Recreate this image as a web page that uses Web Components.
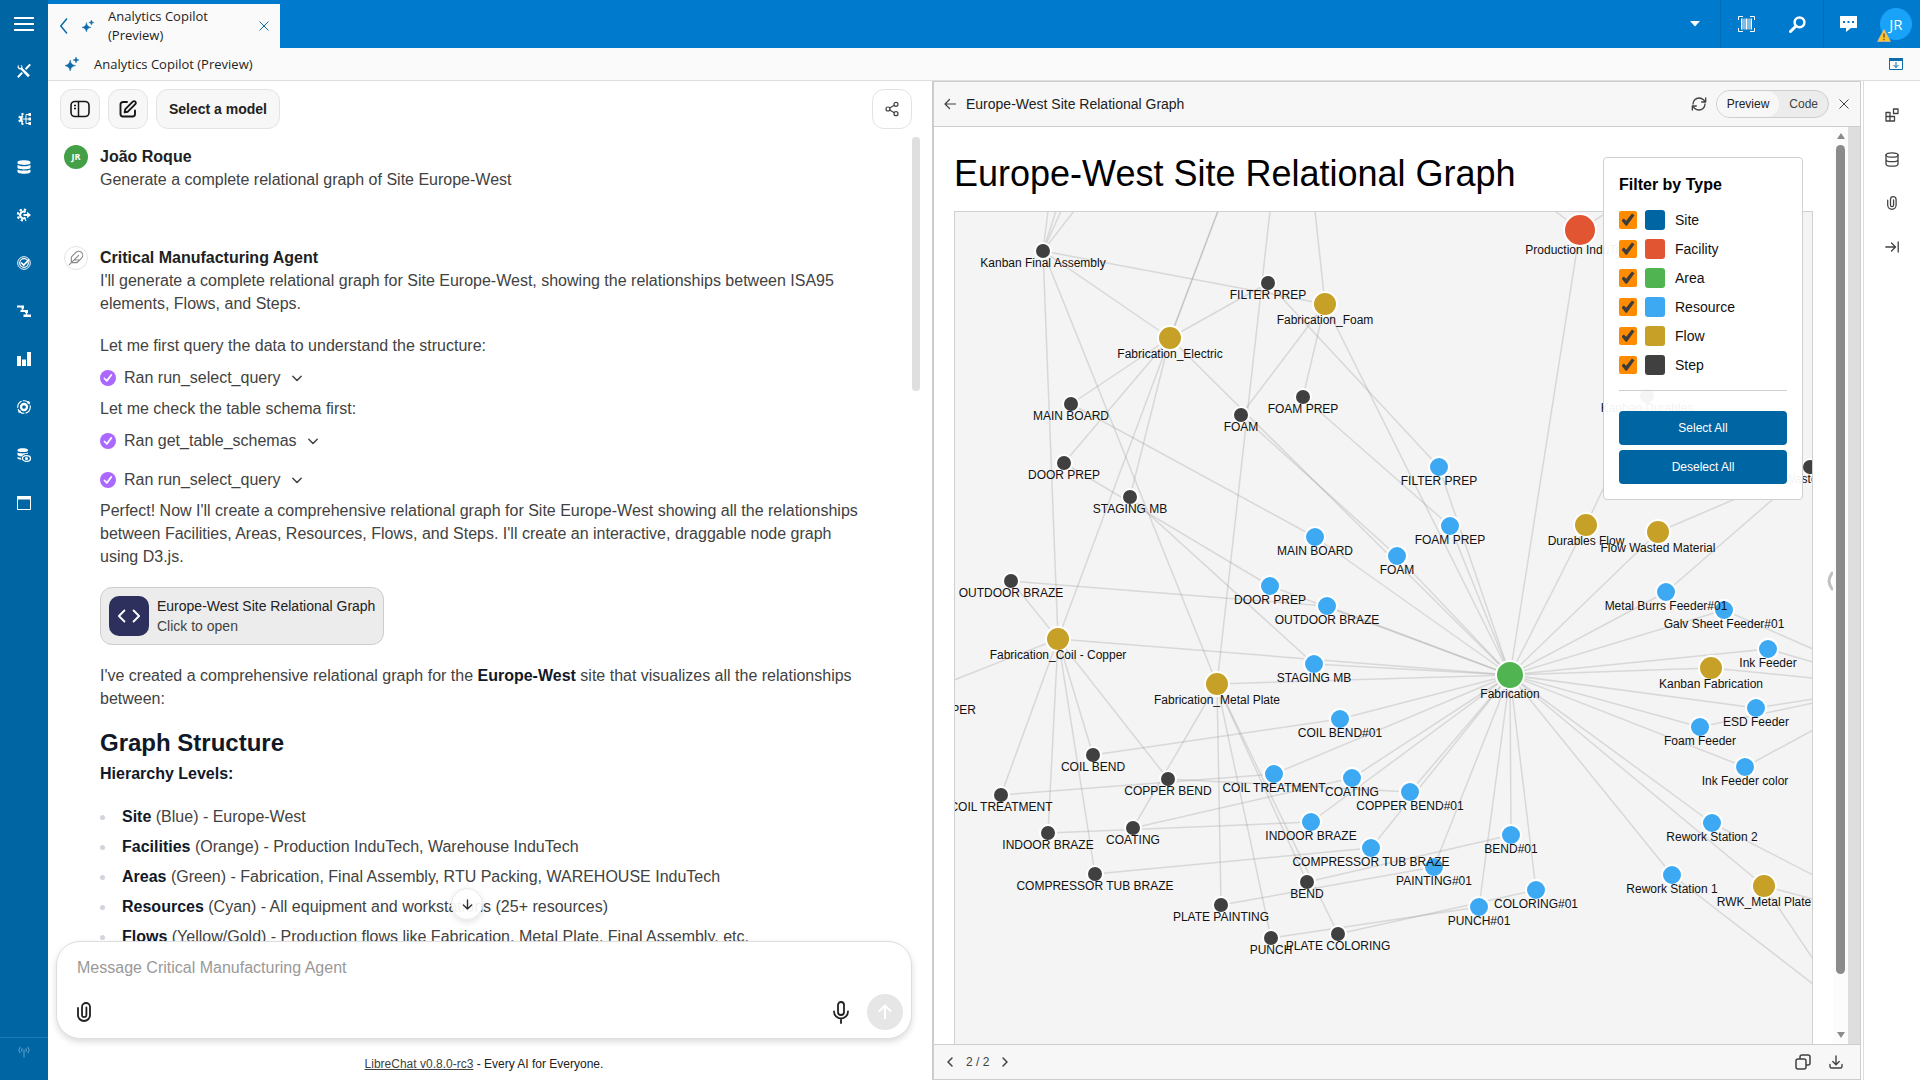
<!DOCTYPE html>
<html lang="en">
<head>
<meta charset="utf-8">
<title>Analytics Copilot (Preview)</title>
<style>
  html, body { margin: 0; height: 100%; overflow: hidden; }
  body { font-family: "Liberation Sans", Arial, sans-serif; color: #212121; background: #fff; }
</style>
</head>
<body>
<app-shell>
  <nav-rail slot="nav"></nav-rail>
  <top-bar slot="top"></top-bar>
  <page-bar slot="bar">Analytics Copilot (Preview)</page-bar>
  <chat-pane slot="chat">
    <chat-message author="João Roque">
      <span slot="avatar">JR</span>
      <p>Generate a complete relational graph of Site Europe-West</p>
    </chat-message>
    <chat-message author="Critical Manufacturing Agent" agent>
      <ui-icon slot="avatar" name="feather" size="16"></ui-icon>
      <p>I'll generate a complete relational graph for Site Europe-West, showing the relationships between ISA95 elements, Flows, and Steps.</p>
      <p class="para">Let me first query the data to understand the structure:</p>
      <tool-run>Ran run_select_query</tool-run>
      <p class="near">Let me check the table schema first:</p>
      <tool-run>Ran get_table_schemas</tool-run>
      <tool-run class="apart">Ran run_select_query</tool-run>
      <p class="near">Perfect! Now I'll create a comprehensive relational graph for Site Europe-West showing all the relationships between Facilities, Areas, Resources, Flows, and Steps. I'll create an interactive, draggable node graph using D3.js.</p>
      <artifact-card class="para" heading="Europe-West Site Relational Graph">Click to open</artifact-card>
      <p class="para">I've created a comprehensive relational graph for the <strong>Europe-West</strong> site that visualizes all the relationships between:</p>
      <h2>Graph Structure</h2>
      <p class="lead"><strong>Hierarchy Levels:</strong></p>
      <ul>
        <li><strong>Site</strong> (Blue) - Europe-West</li>
        <li><strong>Facilities</strong> (Orange) - Production InduTech, Warehouse InduTech</li>
        <li><strong>Areas</strong> (Green) - Fabrication, Final Assembly, RTU Packing, WAREHOUSE InduTech</li>
        <li><strong>Resources</strong> (Cyan) - All equipment and workstations (25+ resources)</li>
        <li><strong>Flows</strong> (Yellow/Gold) - Production flows like Fabrication, Metal Plate, Final Assembly, etc.</li>
      </ul>
    </chat-message>
  </chat-pane>
  <artifact-pane slot="artifact" heading="Europe-West Site Relational Graph">
    <relation-graph></relation-graph>
    <filter-panel slot="overlay"></filter-panel>
  </artifact-pane>
  <tool-rail slot="tools"></tool-rail>
</app-shell>

<style>
  /* Prose inside chat messages lives in the light DOM */
  chat-message p { margin: 0; }
  chat-message .para { margin-top: 19px; }
  chat-message .near { margin-top: 8px; }
  chat-message tool-run { margin-top: 9px; }
  chat-message tool-run.apart { margin-top: 16px; }
  chat-message h2 { margin: 17px 0 0; font-size: 24px; line-height: 32px; font-weight: 600; color: #111827; }
  chat-message .lead { margin-top: 3px; }
  chat-message strong { font-weight: 600; color: #111827; }
  chat-message ul { list-style: none; margin: 17px 0 0; padding: 0; }
  chat-message li { display: flex; align-items: center; white-space: pre; line-height: 30px; }
  chat-message li::before { content: ""; width: 5px; height: 5px; border-radius: 50%; background: #d1d5db; margin-right: 17px; }
</style>

<script>
const S = 'fill="none" stroke="currentColor" stroke-linecap="round" stroke-linejoin="round"';
const ICONS = {
  menu: ['0 0 20 14', '<path d="M0 1h20M0 7h20M0 13h20" stroke="currentColor" stroke-width="2"/>'],
  tools: ['0 0 14 14', '<path d="M1.500 .8a2.800 2.800 0 0 0-.8 3 2.700 2.700 0 0 0 3 1.700l7.300 7.700 1.900-1.900-7.500-7.300a2.700 2.700 0 0 0-1.900-3.200l1.100 1.900-1.100 1.400-1.600-.5z" fill="currentColor"/><path d="M13.200.3 8.600 5.200M5.200 8.600l-4.300 4.600" stroke="currentColor" stroke-width="2"/>'],
  geartree: ['0 0 14 14', '<path d="M6 4a3.200 3.200 0 0 0 0 6" fill="none" stroke="currentColor" stroke-width="2.200"/><path d="M6.500 1.800A5.300 5.300 0 0 0 6.500 12.200" fill="none" stroke="currentColor" stroke-width="2" stroke-dasharray="2.200 1.800"/><path d="M5 7h8M9 7V2.500h4M9 7v4.500h4" fill="none" stroke="currentColor"/><path d="M11.500 1h2.500v3h-2.500zM11.500 5.500h2.500v3h-2.500zM11.500 10h2.500v3h-2.500z" fill="currentColor"/>'],
  dbsolid: ['0 0 14 14', '<path d="M.5 2.200C.5 1 3.300.2 7 .2s6.500.8 6.500 2v.9C13.500 4.300 10.700 5 7 5S.5 4.300.5 3.100zM.5 5C2 5.900 4.300 6.200 7 6.200S12 5.900 13.500 5v2.500C13.500 8.700 10.700 9.400 7 9.400S.5 8.700.5 7.500zM.5 9.400c1.500.9 3.800 1.200 6.500 1.200s5-.3 6.500-1.200v2.400c0 1.200-2.800 2-6.500 2s-6.500-.8-6.500-2z" fill="currentColor"/>'],
  geararrow: ['0 0 14 14', '<path d="M8.500 4.400a3.300 3.300 0 1 0 0 5.200" fill="none" stroke="currentColor" stroke-width="2"/><path d="M9 2.200a5.500 5.500 0 1 0 0 9.600" fill="none" stroke="currentColor" stroke-width="2.200" stroke-dasharray="2.300 2"/><path d="M6.500 6H10V3.800L14 7l-4 3.200V8H6.500z" fill="currentColor"/>'],
  targetcheck: ['0 0 14 14', '<g fill="none" stroke="currentColor"><circle cx="7" cy="7" r="6.300" stroke-width="1"/><circle cx="7" cy="7" r="4.300" stroke-width="1.200"/><path d="m4 6.500 2.700 2.700L12 3.500" stroke-width="1.700"/></g>'],
  steps: ['0 0 14 14', '<path d="M0 1.500h7v3H4.500v-1H0zM3.500 6H11v3H8V8H3.500zM6.500 10.500H14v2.500H6.500z" fill="currentColor"/><path d="M5.500 3v4M9.500 7v5" stroke="currentColor" stroke-width="1.500"/>'],
  bars: ['0 0 14 14', '<path d="M0 4h4v10H0zM5 7.500h4V14H5zM10 0h4v14h-4z" fill="currentColor"/>'],
  target: ['0 0 14 14', '<circle cx="7" cy="7" r="6.300" fill="none" stroke="currentColor" stroke-width="1.100" stroke-dasharray="8 1.200"/><circle cx="7" cy="7" r="3" fill="none" stroke="currentColor" stroke-width="2.300"/><circle cx="11.500" cy="2.500" r="1.300" fill="currentColor"/><circle cx="2.500" cy="11.500" r="1.300" fill="currentColor"/>'],
  dbeye: ['0 0 14 14', '<path d="M.5 1.900C.5.800 3 .2 5.800.2s5.200.6 5.200 1.700v.6c0 1.100-2.400 1.600-5.200 1.600S.5 3.600.5 2.500zM.5 4.600c1.300.6 3.200.9 5.300.9s4-.3 5.200-.9v1.200c-3 .1-5 1-6.300 2.600C2.200 8.200.5 7.700.5 6.800zM.5 9c.9.4 2 .7 3.200.8l.9 2C2.200 11.700.5 11.200.5 10.300z" fill="currentColor"/><ellipse cx="9.500" cy="10.500" rx="4" ry="2.900" fill="none" stroke="currentColor" stroke-width="1.300"/><circle cx="9.500" cy="10.500" r="1.500" fill="currentColor"/>'],
  window: ['0 0 14 14', '<path d="M.5.500h13v13H.5z" fill="none" stroke="currentColor"/><path d="M0 0h14v3.500H0z" fill="currentColor"/>'],
  broadcast: ['0 0 14 14', `<g ${S}><path d="M3 2a4.500 4.500 0 0 0 0 6M11 2a4.500 4.500 0 0 1 0 6M5 3.500a2.500 2.500 0 0 0 0 3M9 3.500a2.500 2.500 0 0 1 0 3M7 5v7"/></g>`],
  back: ['0 0 8 16', '<path d="M7 .5.800 8 7 15.500" fill="none" stroke="currentColor" stroke-width="1.500"/>'],
  sparkle: ['0 0 14 14', '<path d="M5.200 3C5.900 6.600 6.900 7.800 10.600 8.600 6.900 9.400 5.900 10.600 5.200 14.200 4.500 10.600 3.500 9.400-.2 8.600 3.500 7.800 4.500 6.600 5.200 3zM11 0c.4 2 1 2.600 3 3-2 .4-2.600 1-3 3-.4-2-1-2.600-3-3 2-.4 2.600-1 3-3z" fill="currentColor" stroke="currentColor" stroke-width=".5"/>'],
  close: ['0 0 10 10', '<path d="m.5.500 9 9M9.500.500l-9 9" stroke="currentColor"/>'],
  caret: ['0 0 10 6', '<path d="M0 0h10L5 5.500z" fill="currentColor"/>'],
  barcode: ['0 0 17 16', '<path d="M.5 4V.500H5M12 .5h4.500V4M.5 12v3.500H5M12 15.500h4.500V12" fill="none" stroke="currentColor"/><path d="M3 2.500h1.500v11H3zM5.500 2.500h1v11h-1zM7.500 2.500h2v11h-2zM10.500 2.500h1v11h-1zM12.500 2.500H14v11h-1.500z" fill="currentColor"/>'],
  search: ['0 0 17 17', '<circle cx="10.500" cy="6.300" r="4.900" fill="none" stroke="currentColor" stroke-width="2.500"/><path d="m7 10-5.500 5.500" stroke="currentColor" stroke-width="3" stroke-linecap="round"/>'],
  chat: ['0 0 17 16', '<path d="M0 0h17v12H11l-5 4v-4H0z" fill="currentColor"/><path d="M3 5h2v2H3zM7.500 5h2v2h-2zM12 5h2v2h-2z" fill="#007acc"/>'],
  warning: ['0 0 14 13', '<path d="M7 .5 13.500 12.500H.5z" fill="#fdc32d" stroke="#f0b8a0" stroke-width=".6"/><path d="M7 4.500v4M7 9.700v1.500" stroke="#7a5a10" stroke-width="1.500"/>'],
  dock: ['0 0 14 12', '<path d="M.5.500h13v11H.5z" fill="none" stroke="currentColor"/><path d="M0 0h14v3H0z" fill="currentColor"/><path d="M7 4v5.500M4.500 7 7 9.500 9.500 7" fill="none" stroke="currentColor"/>'],
  sidebar: ['0 0 20 18', '<rect x="1" y="1.500" width="18" height="15" rx="4" fill="none" stroke="currentColor" stroke-width="1.600"/><path d="M8.500 1.500v15" stroke="currentColor" stroke-width="1.500"/><path d="M4 5.500h2M4 8.500h2" stroke="currentColor" stroke-width="1.500"/>'],
  compose: ['0 0 18 18', `<g ${S} stroke-width="1.900"><path d="M8 2H4a2.500 2.500 0 0 0-2.500 2.500v9.500A2.500 2.500 0 0 0 4 16.500h9.500A2.500 2.500 0 0 0 16 14v-3.500"/><path d="m6.300 9.200 7.500-7.500a1.700 1.700 0 0 1 2.500 2.500l-7.500 7.500-3.200.7z"/></g>`],
  share: ['0 0 24 24', `<g ${S} stroke-width="1.800"><circle cx="18" cy="5" r="3"/><circle cx="6" cy="12" r="3"/><circle cx="18" cy="19" r="3"/><path d="m8.600 13.500 6.800 4M15.400 6.500l-6.800 4"/></g>`],
  feather: ['0 0 24 24', `<g ${S} stroke-width="1.700"><path d="M12.700 19a2 2 0 0 0 1.400-.6l6.200-6.200a6 6 0 0 0-8.500-8.500L5.600 9.900A2 2 0 0 0 5 11.300V18a1 1 0 0 0 1 1zM16 8 2 22M17.500 15H9"/></g>`],
  chevdown: ['0 0 12 12', `<path d="m1.800 4.300 4.200 4.200 4.200-4.200" ${S} stroke-width="1.500"/>`],
  check: ['0 0 16 16', '<circle cx="8" cy="8" r="8" fill="#ab68ff"/><path d="m4.500 8.500 2.300 2.400L11.300 5" fill="none" stroke="#fff" stroke-width="1.800" stroke-linecap="round" stroke-linejoin="round"/>'],
  code: ['0 0 24 24', `<path d="m17 18 6-6-6-6M7 6l-6 6 6 6" ${S} stroke-width="2"/>`],
  arrowdown: ['0 0 12 12', `<path d="M6 1v10M1.500 6.500 6 11l4.500-4.500" ${S} stroke-width="1.500"/>`],
  arrowup: ['0 0 16 16', `<path d="M8 14.500v-13M2.500 7 8 1.500 13.500 7" ${S} stroke-width="2"/>`],
  clip: ['0 0 14 20', `<path d="M1 6v7a6 6 0 0 0 12 0V5a4 4 0 0 0-8 0v8a2.200 2.200 0 0 0 4.400 0V5.500" ${S} stroke-width="1.800"/>`],
  mic: ['0 0 18 24', `<g ${S} stroke-width="1.800"><rect x="6" y="2" width="6" height="13" rx="3"/><path d="M2 11.500a7 7 0 0 0 14 0M9 19v4"/></g>`],
  arrowleft: ['0 0 12 12', `<path d="M11.500 6H1M5.500 1.500 1 6l4.500 4.500" ${S} stroke-width="1.200"/>`],
  refresh: ['0 0 24 24', `<g ${S} stroke-width="2"><path d="M3 12a9 9 0 0 1 9-9 9.800 9.800 0 0 1 6.700 2.700L22 9M22 3v6h-6M21 12a9 9 0 0 1-9 9 9.800 9.800 0 0 1-6.700-2.700L2 15M8 15H2v6"/></g>`],
  chevleft: ['0 0 8 12', `<path d="M6 2 2 6l4 4" ${S} stroke-width="1.500"/>`],
  chevright: ['0 0 8 12', `<path d="m2 2 4 4-4 4" ${S} stroke-width="1.500"/>`],
  copy: ['0 0 16 16', `<g ${S} stroke-width="1.500"><rect x="1" y="5" width="10" height="10" rx="2"/><path d="M5 4.500V3a2 2 0 0 1 2-2h6a2 2 0 0 1 2 2v6a2 2 0 0 1-2 2h-1.500"/></g>`],
  download: ['0 0 14 14', `<path d="M7 1v8.500M3.800 6.500 7 9.700l3.200-3.200M1 9.500v2A1.500 1.500 0 0 0 2.500 13h9a1.500 1.500 0 0 0 1.500-1.500v-2" ${S} stroke-width="1.400"/>`],
  blocks: ['0 0 14 14', `<path d="M1 4.500h4V13H1zM1 8.500h8.500V13H5V8.500M8.500 1H13v4.500H8.500z" ${S} stroke-width="1.300"/>`],
  dbline: ['0 0 14 15', `<g ${S} stroke-width="1.300"><ellipse cx="7" cy="3" rx="6" ry="2.200"/><path d="M1 3v9c0 1.200 2.700 2.200 6 2.200s6-1 6-2.200V3M1 7.500c0 1.200 2.700 2.200 6 2.200s6-1 6-2.200"/></g>`],
  toend: ['0 0 14 12', `<path d="M.8 6h9.400M6.500 2l4 4-4 4M13.200 1v10" ${S} stroke-width="1.300"/>`],
  handle: ['0 0 6 20', '<path d="M5 2C3 5 2 7.500 2 10s1 5 3 8" fill="none" stroke="#c0c0c0" stroke-width="3" stroke-linecap="round"/>']
};

/* Registers an element whose shadow root is cloned from a template */
function element(name, markup, setup) {
  const tpl = document.createElement('template');
  customElements.define(name, class extends HTMLElement {
    connectedCallback() {
      if (this.shadowRoot) return;
      const root = this.attachShadow({ mode: 'open' });
      tpl.innerHTML = typeof markup === 'function' ? markup(this) : markup;
      root.append(tpl.content.cloneNode(true));
      if (setup) setup(root, this);
    }
  });
}
const icon = (name, size) => `<ui-icon name="${name}" size="${size}"></ui-icon>`;
const RESET = `button { font: inherit; color: inherit; background: none; border: 0; padding: 0; margin: 0; display: grid; place-items: center; cursor: pointer; }`;

element('ui-icon', el => {
  const [box, body] = ICONS[el.getAttribute('name')];
  const [, , w, h] = box.split(' ');
  const size = +el.getAttribute('size');
  return `<style>:host { display: inline-grid; flex: none; } svg { display: block; height: ${size}px; aspect-ratio: ${w} / ${h}; }</style>
    <svg viewBox="${box}" aria-hidden="true">${body}</svg>`;
});

element('app-shell', `
<style>
  :host { display: grid; height: 100vh; grid-template-columns: 48px minmax(0, 1fr); }
  .main { display: flex; flex-direction: column; min-width: 0; min-height: 0; }
  .work { flex: 1; min-height: 0; display: flex; }
  .split { flex: 1; min-width: 0; display: grid; grid-template-columns: minmax(0, 884fr) minmax(0, 929fr); grid-template-rows: minmax(0, 1fr); margin-right: 2px; }
</style>
<slot name="nav"></slot>
<div class="main">
  <slot name="top"></slot>
  <slot name="bar"></slot>
  <div class="work">
    <div class="split"><slot name="chat"></slot><slot name="artifact"></slot></div>
    <slot name="tools"></slot>
  </div>
</div>`);

element('nav-rail', `
<style>
  ${RESET}
  :host { display: flex; flex-direction: column; background: #0065a3; color: #fff; }
  button { height: 48px; width: 100%; }
  .menu { height: 47px; }
  nav { flex: 1; }
  .foot { height: 43px; border-top: 1px solid #1d7ab5; color: #5fa3cf; display: grid; justify-items: center; align-items: start; padding-top: 7px; box-sizing: border-box; }
</style>
<button class="menu" aria-label="Menu">${icon('menu', 14)}</button>
<nav>${['tools', 'geartree', 'dbsolid', 'geararrow', 'targetcheck', 'steps', 'bars', 'target', 'dbeye', 'window']
  .map(n => `<button aria-label="${n}">${icon(n, 14)}</button>`).join('')}</nav>
<div class="foot">${icon('broadcast', 14)}</div>`);

element('top-bar', `
<style>
  ${RESET}
  :host { display: flex; height: 48px; background: #007acc; color: #fff; font-family: "Open Sans", "Noto Sans", sans-serif; }
  .tab { display: flex; align-items: center; width: 232px; height: 44px; margin-top: 4px; box-sizing: border-box; padding: 0 11px 0 12px; background: #fafafa; color: #0f6cab; }
  .tab span { flex: 1; margin-left: 14px; font-size: 13px; line-height: 19px; color: #1e1e1e; }
  .tab ui-icon[name=sparkle] { margin-left: 14px; }
  .actions { margin-left: auto; display: flex; }
  .actions div { display: flex; border-right: 1px solid #006db8; box-sizing: border-box; }
  .actions button { width: 51px; height: 48px; }
  .menu { width: 49px; }
  .user { position: relative; width: 32px; height: 32px; margin: 8px 8px 0; border-radius: 50%; background: #18a3f9; font-size: 15px; line-height: 32px; text-align: center; }
  .user ui-icon { position: absolute; left: -3px; bottom: -2px; }
  .actions button.chat { width: 48px; }
</style>
<div class="tab">${icon('back', 16)}${icon('sparkle', 12)}<span>Analytics Copilot (Preview)</span><button aria-label="Close tab">${icon('close', 10)}</button></div>
<div class="actions">
  <div><button class="menu" aria-label="More">${icon('caret', 6)}</button></div>
  <div><button aria-label="Scan">${icon('barcode', 16)}</button><button aria-label="Search">${icon('search', 17)}</button></div>
  <button class="chat" aria-label="Messages">${icon('chat', 16)}</button>
  <span class="user">JR${icon('warning', 13)}</span>
</div>`);

element('page-bar', `
<style>
  ${RESET}
  :host { display: flex; align-items: center; height: 32px; padding: 0 17px; background: #fafafa; border-bottom: 1px solid #dedede; font: 13px/18px "Open Sans", "Noto Sans", sans-serif; color: #1e1e1e; }
  ui-icon { color: #0f6cab; }
  span { flex: 1; margin-left: 15px; }
</style>
${icon('sparkle', 14)}<span><slot></slot></span><button aria-label="Dock panel">${icon('dock', 12)}</button>`);

element('chat-message', el => `
<style>
  :host { display: flex; gap: 12px; font-size: 16px; line-height: 23px; color: #424242; margin-bottom: 55px; }
  .avatar { flex: none; display: grid; place-items: center; width: 24px; height: 24px; border-radius: 50%; box-sizing: border-box; background: #43a047; color: #fff; font: 700 9px/24px "Open Sans", sans-serif; }
  :host([agent]) .avatar { background: #fff; border: 1px solid #e3e3e3; color: #8a8a8a; }
  .body { flex: 1; min-width: 0; }
  h3 { margin: 0; font-size: 16px; line-height: 23px; font-weight: 600; color: #212121; }
</style>
<div class="avatar"><slot name="avatar"></slot></div>
<div class="body"><h3>${el.getAttribute('author')}</h3><slot></slot></div>`);

element('tool-run', `
<style>
  ${RESET}
  :host { display: block; }
  button { display: flex; align-items: center; gap: 8px; height: 23px; }
  ui-icon:last-child { margin-left: 2px; }
</style>
<button>${icon('check', 16)}<slot></slot>${icon('chevdown', 12)}</button>`);

element('artifact-card', el => `
<style>
  ${RESET}
  :host { display: block; }
  button { display: flex; align-items: center; gap: 8px; padding: 8px; border: 1px solid #cdcdcd; border-radius: 12px; background: #ececec; font-size: 14px; line-height: 20px; text-align: left; }
  .badge { display: grid; place-items: center; width: 40px; height: 40px; border-radius: 10px; background: #2d305c; color: #fff; }
  b { display: block; font-weight: 400; color: #212121; }
</style>
<button><span class="badge">${icon('code', 22)}</span><span><b>${el.getAttribute('heading')}</b><slot></slot></span></button>`);

element('chat-pane', `
<style>
  ${RESET}
  :host { display: flex; flex-direction: column; min-height: 0; background: #fff; }
  header { display: flex; gap: 8px; padding: 8px 20px 8px 12px; }
  header button { width: 40px; height: 40px; box-sizing: border-box; border: 1px solid #e3e3e3; border-radius: 12px; background: #f7f7f7; color: #171717; }
  header .model { width: 124px; font-size: 14px; font-weight: 600; color: #212121; }
  header .share { margin-left: auto; background: #fff; color: #424242; }
  .list { position: relative; flex: 1; min-height: 0; overflow: hidden; padding: 8px 70px 0 16px; }
  .thumb { position: absolute; top: 0; right: 12px; width: 8px; height: 254px; border-radius: 4px; background: #dfdfdf; }
  .down { position: absolute; left: 403px; bottom: 21px; width: 32px; height: 32px; border: 1px solid #e8e8e8; border-radius: 50%; background: rgba(255,255,255,.92); box-shadow: 0 2px 6px rgba(0,0,0,.12); color: #303030; }
  footer { height: 41px; display: flex; align-items: center; justify-content: center; white-space: pre; font-size: 12px; line-height: 16px; color: #212121; padding: 8px 12px 0 0; box-sizing: border-box; }
  a { color: #424242; }
</style>
<header>
  <button aria-label="Toggle sidebar">${icon('sidebar', 18)}</button>
  <button aria-label="New chat">${icon('compose', 18)}</button>
  <button class="model">Select a model</button>
  <button class="share" aria-label="Share">${icon('share', 16)}</button>
</header>
<div class="list"><slot></slot><div class="thumb"></div><button class="down" aria-label="Scroll to bottom">${icon('arrowdown', 11)}</button></div>
<chat-composer></chat-composer>
<footer><a href="#">LibreChat v0.8.0-rc3</a> - Every AI for Everyone.</footer>`);

element('chat-composer', `
<style>
  ${RESET}
  :host { display: block; margin: 0 20px 0 8px; }
  form { display: flex; flex-direction: column; height: 98px; box-sizing: border-box; padding: 0 8px 8px 20px; border: 1px solid #dedede; border-radius: 24px; background: #fff; box-shadow: 0 3px 6px rgba(0,0,0,.14); }
  textarea { flex: 1; min-height: 0; border: 0; outline: 0; resize: none; padding: 14px 0 0; background: none; font: 16px/23px "Liberation Sans", Arial, sans-serif; color: #212121; }
  textarea::placeholder { color: #999; opacity: 1; }
  .row { display: flex; align-items: center; gap: 16px; height: 36px; color: #212121; }
  .mic { margin-left: auto; width: 20px; }
  .send { width: 36px; height: 36px; border-radius: 50%; background: #e6e6e6; color: #fff; }
</style>
<form>
  <textarea aria-label="Message" placeholder="Message Critical Manufacturing Agent"></textarea>
  <div class="row">
    <button type="button" aria-label="Attach file">${icon('clip', 20)}</button>
    <button type="button" class="mic" aria-label="Dictate">${icon('mic', 24)}</button>
    <button type="button" class="send" aria-label="Send">${icon('arrowup', 16)}</button>
  </div>
</form>`);

element('artifact-pane', el => `
<style>
  ${RESET}
  :host { display: flex; flex-direction: column; min-height: 0; box-sizing: border-box; border: 1px solid #cdcdcd; border-left-width: 2px; background: #fff; color: #424242; }
  header, footer { flex: none; display: flex; align-items: center; background: #f7f7f7; box-sizing: border-box; }
  header { height: 45px; padding: 0 11px 0 10px; border-bottom: 1px solid #cdcdcd; }
  h2 { flex: 1; margin: 0 0 0 10px; font-size: 14px; line-height: 20px; font-weight: 400; color: #212121; }
  .toggle { display: flex; margin: 0 10px 0 9px; border: 1px solid #cdcdcd; border-radius: 14px; background: #ececec; font-size: 12px; line-height: 26px; }
  .toggle button { padding: 0 10px; border-radius: 13px; }
  .toggle .on { background: #f7f7f7; color: #212121; }
  footer { height: 35px; padding: 0 17px 0 12px; border-top: 1px solid #cdcdcd; gap: 12px; font-size: 12px; }
  footer .copy { margin-left: auto; margin-right: 6px; }
  .view { flex: 1; min-height: 0; display: flex; }
  .doc { position: relative; flex: 1; min-width: 0; padding: 20px 20px 0; display: flex; flex-direction: column; overflow: hidden; }
  h1 { margin: 0 0 10px; font-size: 36px; line-height: 54px; font-weight: 400; color: #000; white-space: nowrap; }
  .overlay { position: absolute; top: 30px; right: 30px; }
  .grip { position: absolute; right: 0; top: 444px; }
  .bar { width: 15px; background: #fcfcfc; display: flex; flex-direction: column; align-items: center; padding: 6px 0; box-sizing: border-box; }
  .bar i { flex: 829; width: 9px; border-radius: 5px; background: #8b8b8b; }
  .bar s { flex: 58; }
  .bar b { width: 0; border: 4px solid transparent; border-bottom: 6px solid #8b8b8b; border-top: 0; margin-bottom: 6px; }
  .bar b:last-child { border-bottom: 0; border-top: 6px solid #8b8b8b; margin: 0; }
  .gutter { width: 12px; background: #dedede; }
</style>
<header>
  <button aria-label="Back">${icon('arrowleft', 12)}</button>
  <h2>${el.getAttribute('heading')}</h2>
  <button aria-label="Refresh">${icon('refresh', 16)}</button>
  <div class="toggle"><button class="on">Preview</button><button>Code</button></div>
  <button aria-label="Close">${icon('close', 10)}</button>
</header>
<div class="view">
  <div class="doc"><h1>${el.getAttribute('heading')}</h1><slot></slot><div class="overlay"><slot name="overlay"></slot></div><div class="grip">${icon('handle', 20)}</div></div>
  <div class="bar"><b></b><i></i><s></s><b></b></div>
  <div class="gutter"></div>
</div>
<footer>
  <button aria-label="Previous version">${icon('chevleft', 12)}</button><span>2 / 2</span><button aria-label="Next version">${icon('chevright', 12)}</button>
  <button class="copy" aria-label="Copy">${icon('copy', 16)}</button><button aria-label="Download">${icon('download', 14)}</button>
</footer>`);

element('filter-panel', `
<style>
  ${RESET}
  :host { display: block; width: 200px; box-sizing: border-box; padding: 15px; border: 1px solid #d0d0d0; border-radius: 4px; background: rgba(255,255,255,.95); color: #111; }
  h4 { margin: 0 0 8px; font-size: 16px; line-height: 24px; font-weight: 600; color: #000; }
  label { display: flex; align-items: center; height: 29px; font-size: 14px; }
  input { appearance: none; width: 18px; height: 18px; margin: 0 8px 0 0; border-radius: 2px; background: #ff8c00; display: grid; place-items: center; }
  input:checked::before { content: ""; width: 13px; height: 13px; background: #3c3c3c; clip-path: polygon(0 58%, 18% 42%, 36% 60%, 80% 4%, 100% 18%, 42% 98%, 32% 98%); }
  i { width: 20px; height: 20px; margin-right: 10px; border-radius: 3px; }
  .btns { margin-top: 11px; padding-top: 20px; border-top: 1px solid #d0d0d0; display: grid; gap: 5px; }
  .btns button { height: 34px; border-radius: 4px; background: #0065a3; color: #fff; font-size: 12px; }
</style>
<h4>Filter by Type</h4>
${[['Site', '#0065a3'], ['Facility', '#e15532'], ['Area', '#50b450'], ['Resource', '#3ca9f2'], ['Flow', '#c7a127'], ['Step', '#404040']]
  .map(([n, c]) => `<label><input type="checkbox" checked><i style="background:${c}"></i>${n}</label>`).join('')}
<div class="btns"><button>Select All</button><button>Deselect All</button></div>`);

/* kind: radius, fill, label offset */
const KINDS = {
  facility: [16, '#e15532', 24], area: [14, '#50b450', 23], resource: [10, '#3ca9f2', 18],
  flow: [12, '#c7a127', 20], step: [8, '#404040', 16]
};
const NODES = {
  kfa: ['step', 1043, 251, 'Kanban Final Assembly'], fps: ['step', 1268, 283, 'FILTER PREP'],
  ff: ['flow', 1325, 304, 'Fabrication_Foam'], fe: ['flow', 1170, 338, 'Fabrication_Electric'],
  mbs: ['step', 1071, 404, 'MAIN BOARD'], fos: ['step', 1241, 415, 'FOAM'], fops: ['step', 1303, 397, 'FOAM PREP'],
  dps: ['step', 1064, 463, 'DOOR PREP'], sms: ['step', 1130, 497, 'STAGING MB'], obs: ['step', 1011, 581, 'OUTDOOR BRAZE'],
  fc: ['flow', 1058, 639, 'Fabrication_Coil - Copper'], fm: ['flow', 1217, 684, 'Fabrication_Metal Plate'],
  mbr: ['resource', 1315, 537, 'MAIN BOARD'], for: ['resource', 1397, 556, 'FOAM'], dpr: ['resource', 1270, 586, 'DOOR PREP'],
  obr: ['resource', 1327, 606, 'OUTDOOR BRAZE'], smr: ['resource', 1314, 664, 'STAGING MB'], cbr: ['resource', 1340, 719, 'COIL BEND#01'],
  cbs: ['step', 1093, 755, 'COIL BEND'], pbs: ['step', 1168, 779, 'COPPER BEND'], cts: ['step', 1001, 795, 'COIL TREATMENT'],
  ibs: ['step', 1048, 833, 'INDOOR BRAZE'], cos: ['step', 1133, 828, 'COATING'], tbs: ['step', 1095, 874, 'COMPRESSOR TUB BRAZE'],
  pps: ['step', 1221, 905, 'PLATE PAINTING'], pus: ['step', 1271, 938, 'PUNCH'], bes: ['step', 1307, 882, 'BEND'],
  pcs: ['step', 1338, 934, 'PLATE COLORING'], ctr: ['resource', 1274, 774, 'COIL TREATMENT'], cor: ['resource', 1352, 778, 'COATING'],
  pbr: ['resource', 1410, 792, 'COPPER BEND#01'], ibr: ['resource', 1311, 822, 'INDOOR BRAZE'],
  par: ['resource', 1434, 867, 'PAINTING#01'], tbr: ['resource', 1371, 848, 'COMPRESSOR TUB BRAZE'],
  ber: ['resource', 1511, 835, 'BEND#01'], clr: ['resource', 1536, 890, 'COLORING#01'], pur: ['resource', 1479, 907, 'PUNCH#01'],
  rw1: ['resource', 1672, 875, 'Rework Station 1'], rw2: ['resource', 1712, 823, 'Rework Station 2'], rwk: ['flow', 1764, 886, 'RWK_Metal Plate'],
  fab: ['area', 1510, 675, 'Fabrication'], fopr: ['resource', 1450, 526, 'FOAM PREP'], fpr: ['resource', 1439, 467, 'FILTER PREP'],
  dur: ['flow', 1586, 525, 'Durables Flow'], was: ['flow', 1658, 532, 'Flow Wasted Material'],
  gal: ['resource', 1724, 610, 'Galv Sheet Feeder#01'], met: ['resource', 1666, 592, 'Metal Burrs Feeder#01'],
  ink: ['resource', 1768, 649, 'Ink Feeder'], kf: ['flow', 1711, 668, 'Kanban Fabrication'], esd: ['resource', 1756, 708, 'ESD Feeder'],
  foa: ['resource', 1700, 727, 'Foam Feeder'], inc: ['resource', 1745, 767, 'Ink Feeder color'],
  pro: ['facility', 1580, 230, 'Production InduTech'], kd: ['step', 1647, 396, 'Kanban Durables'], ws: ['step', 1810, 467, '']
};
const LINKS = `fab-fpr fab-fopr fab-for fab-mbr fab-dpr fab-obr fab-smr fab-cbr fab-ctr fab-cor fab-pbr fab-ibr fab-tbr fab-par
fab-ber fab-pur fab-clr fab-rw1 fab-rw2 fab-met fab-gal fab-ink fab-esd fab-foa fab-inc fab-fm fab-fc fab-fe fab-ff fab-dur fab-was
fab-kf fab-rwk fab-pro fps-fpr fops-fopr fos-for mbs-mbr dps-dpr obs-obr sms-smr cbs-cbr cts-ctr cos-cor pbs-pbr ibs-ibr tbs-tbr
pps-par bes-ber pus-pur pcs-clr fe-kfa fe-fps fe-mbs fe-dps fe-sms fe-fc ff-kfa ff-fos ff-fops fm-kfa fc-kfa fc-obs fc-cts fc-ibs
fc-tbs fc-cbs fc-pbs fm-cos fm-pps fm-pus fm-bes fm-pcs met-ws was-ws dur-kd`.split(/\s+/);
/* Links that run to nodes beyond the visible canvas */
const OPEN = [['kfa', 1048, 211], ['kfa', 1056, 211], ['kfa', 1061, 211], ['kfa', 1074, 211], ['fe', 1218, 211], ['fe', 1218, 211],
  ['fm', 1270, 211], ['ff', 1315, 211], ['fc', 954, 680], ['gal', 1813, 649], ['ink', 1813, 662], ['kf', 1813, 678], ['esd', 1813, 699],
  ['foa', 1813, 703], ['inc', 1813, 730], ['rw2', 1813, 875], ['rw1', 1813, 984], ['rwk', 1813, 899], ['rwk', 1813, 959],
  ['pro', 1555, 211], ['pro', 1609, 211]];

element('relation-graph', () => {
  const line = (a, x, y) => `<line x1="${NODES[a][1]}" y1="${NODES[a][2]}" x2="${x}" y2="${y}"/>`;
  const links = LINKS.map(l => { const [a, b] = l.split('-'); return line(a, NODES[b][1], NODES[b][2]); }).join('') + OPEN.map(o => line(...o)).join('');
  const nodes = Object.values(NODES).map(([k, x, y, t]) => {
    const [r, fill, dy] = KINDS[k];
    return `<g><circle cx="${x}" cy="${y}" r="${r}" fill="${fill}"/>${t && `<text x="${x}" y="${y + dy}">${t}</text>`}</g>`;
  }).join('');
  return `
<style>
  :host { flex: 1; min-height: 0; display: block; border: 1px solid #d0d0d0; border-bottom: 0; background: #f4f4f4; overflow: hidden; }
  svg { display: block; width: 100%; height: 100%; }
  line { stroke: #999; stroke-opacity: .3; stroke-width: 1.5; }
  circle { stroke: #fff; stroke-width: 2; }
  text { font: 12px "Liberation Sans", Arial, sans-serif; fill: #111; text-anchor: middle; }
  .cut { text-anchor: end; }
  .run { text-anchor: start; }
</style>
<svg><g transform="translate(-955 -212)"><g>${links}</g>${nodes}<text class="cut" x="976" y="714">PER</text><text class="run" x="1784" y="483">Waste</text></g></svg>`;
});

element('tool-rail', `
<style>
  ${RESET}
  :host { display: flex; flex-direction: column; width: 56px; padding-top: 12px; border-left: 1px solid #dedede; background: #fff; color: #424242; }
  button { height: 44px; width: 100%; }
</style>
<button aria-label="Widgets">${icon('blocks', 14)}</button><button aria-label="Data">${icon('dbline', 15)}</button>
<button aria-label="Attachments">${icon('clip', 14)}</button><button aria-label="Collapse">${icon('toend', 12)}</button>`);
</script>
</body>
</html>
